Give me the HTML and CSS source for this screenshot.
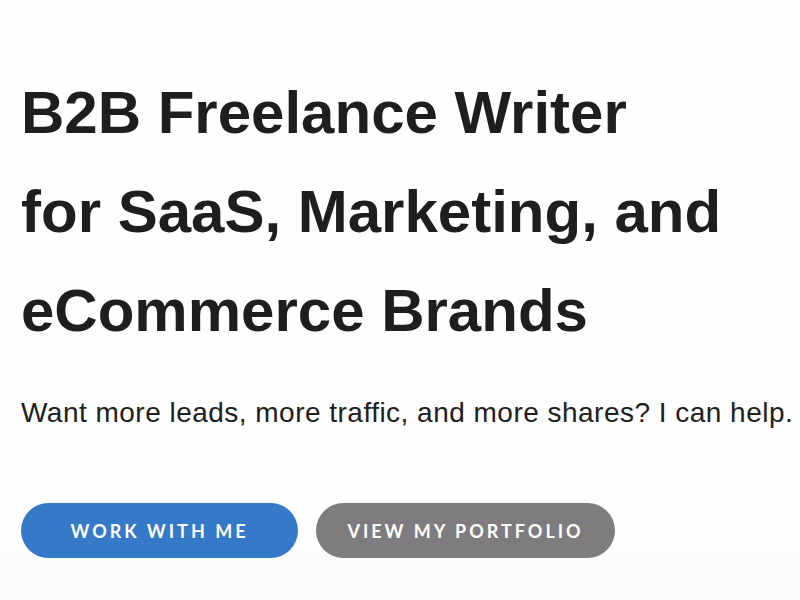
FILE: index.html
```html
<!DOCTYPE html>
<html>
<head>
<meta charset="utf-8">
<link rel="stylesheet" href="styles.css">
</head>
<body>
<main class="hero">
  <h1 class="title">B2B Freelance Writer<br>for SaaS, Marketing, and<br>eCommerce Brands</h1>
  <p class="lead">Want more leads, more traffic, and more shares? I can help.</p>
  <div class="actions">
    <a class="btn btn-blue" href="#">WORK WITH ME</a>
    <a class="btn btn-gray" href="#">VIEW MY PORTFOLIO</a>
  </div>
</main>
</body>
</html>
```
FILE: styles.css
```css
html, body {
  margin: 0;
  padding: 0;
}
body {
  width: 800px;
  height: 600px;
  overflow: hidden;
  background: linear-gradient(to bottom, #fefefe 0, #fefefe 552px, #fcfbfd 552px, #fcfbfd 100%);
}
.hero {
  padding: 63px 0 0 21px;
}
.title {
  margin: 0;
  font-family: "Liberation Sans", Arial, sans-serif;
  font-weight: 700;
  font-size: 60px;
  line-height: 99px;
  color: #1e1e1f;
  white-space: nowrap;
}
.lead {
  margin: 36px 0 0;
  font-family: "Liberation Sans", Arial, sans-serif;
  font-weight: 400;
  font-size: 28px;
  line-height: 34px;
  letter-spacing: 0.48px;
  color: #202020;
  white-space: nowrap;
}
.actions {
  display: flex;
  gap: 18px;
  margin-top: 73px;
}
.btn {
  display: flex;
  align-items: center;
  justify-content: center;
  height: 55px;
  border-radius: 28px;
  font-family: Lato, "Liberation Sans", sans-serif;
  font-weight: 700;
  font-size: 18px;
  letter-spacing: 3px;
  color: #ffffff;
  text-decoration: none;
  box-sizing: border-box;
}
.btn-blue {
  width: 277px;
  background: #3579c9;
}
.btn-gray {
  width: 299px;
  background: #7f7c7f;
}
```
